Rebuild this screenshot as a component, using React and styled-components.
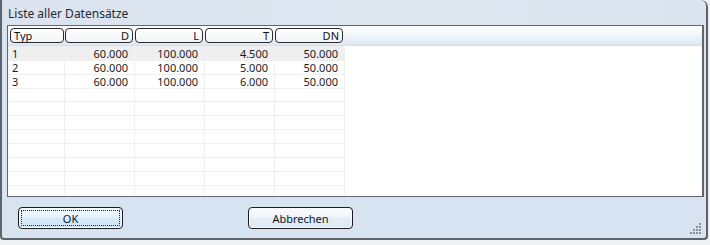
import React from 'react';
import styled, { createGlobalStyle } from 'styled-components';

const Global = createGlobalStyle`
  html, body {
    margin: 0;
    padding: 0;
    background: #eef0f3;
  }
  body {
    font-family: "Noto Sans", "Liberation Sans", sans-serif;
    font-size: 11px;
    color: #1b1b1b;
  }
`

const Window = styled.div`
  position: relative;
  box-sizing: border-box;
  width: 708px;
  height: 240px;
  background: #d7e3f1;
  border-left: 2px solid #5c636c;
  border-right: 2px solid #5c636c;
  border-bottom: 2px solid #5c636c;
  border-top-right-radius: 7px;
  border-bottom-left-radius: 4px;
  border-bottom-right-radius: 4px;
  display: flex;
  flex-direction: column;
`

const TitleBar = styled.div`
  height: 25px;
  padding: 1px 0 0 6px;
  box-sizing: border-box;
  display: flex;
  align-items: center;
  font-size: 12px;
  color: #1e2a36;
  background: linear-gradient(to right, #dae3ee, #dfe7f1 60%, #dae3ee);
  border-top-right-radius: 6px;
`

const List = styled.div`
  box-sizing: border-box;
  margin-left: 5px;
  width: 697px;
  height: 172px;
  background: #fff;
  border: 1px solid #5f6670;
  border-right-width: 2px;
  overflow: hidden;
`

const Header = styled.div`
  display: grid;
  grid-template-columns: 57px 70px 70px 70px 70px 1fr;
  height: 19px;
  align-items: center;
  background: linear-gradient(#ffffff, #f4f8fc 40%, #dde8f5);
  border-bottom: 1px solid #dadfe5;
`

const Pill = styled.div`
  box-sizing: border-box;
  height: 15px;
  margin: 0 ${p => (p.first ? '1px 0 2px' : '2px 0 0')};
  border: 1px solid #2a2a2a;
  border-radius: 4px;
  background: linear-gradient(#ffffff, #f1f4f8);
  padding: 0 3px;
  line-height: 13px;
  text-align: ${p => (p.left ? 'left' : 'right')};
  color: #111;
`

const Row = styled.div`
  display: grid;
  grid-template-columns: 57px 70px 70px 70px 70px;
  height: 14px;
  width: 337px;
  background: ${p => (p.active ? '#efefef' : '#fff')};
`

const Cell = styled.div`
  box-sizing: border-box;
  border-right: 1px solid #f0f0f0;
  border-bottom: 1px solid #f0f0f0;
  padding: ${p => (p.left ? '1px 0 0 4px' : '1px 6px 0 0')};
  text-align: ${p => (p.left ? 'left' : 'right')};
  line-height: 13px;
  white-space: nowrap;
`

const ButtonBar = styled.div`
  display: flex;
  gap: 125px;
  padding: 10px 0 0 16px;
`

const Button = styled.button`
  position: relative;
  box-sizing: border-box;
  width: 105px;
  height: 22px;
  font-family: "Noto Sans", "Liberation Sans", sans-serif;
  font-size: 11px;
  color: #101828;
  border: 1px solid #1c1c1c;
  border-radius: 4px;
  background: ${p => (p.primary
    ? 'linear-gradient(#f2f9fe, #e3f1fb 50%, #d6eaf9 51%, #cfe5f7)'
    : 'linear-gradient(#fafcfe, #eef4fa 50%, #e4edf6 51%, #dde8f3)')};
  box-shadow: inset 0 0 0 1px #f8fbfe;
  padding: 0;
`

const Focus = styled.span`
  position: absolute;
  inset: 2px;
  border: 1px dotted #222;
  border-radius: 1px;
`

const Grip = styled.svg`
  position: absolute;
  right: 3px;
  bottom: 2px;
`

const rows = [
  ['1', '60.000', '100.000', '4.500', '50.000'],
  ['2', '60.000', '100.000', '5.000', '50.000'],
  ['3', '60.000', '100.000', '6.000', '50.000'],
];

const empty = Array.from({ length: 9 }, () => ['', '', '', '', '']);

const App = () => {
  const heads = ['Typ', 'D', 'L', 'T', 'DN'];
  return (
    <>
      <Global />
      <Window>
        <TitleBar>Liste aller Datensätze</TitleBar>
        <List>
          <Header>
            {heads.map((h, i) => (
              <Pill key={h} first={i === 0} left={i === 0}>{h}</Pill>
            ))}
            <div />
          </Header>
          {rows.concat(empty).map((r, i) => (
            <Row key={i} active={i === 0}>
              {r.map((c, j) => (
                <Cell key={j} left={j === 0}>{c}</Cell>
              ))}
            </Row>
          ))}
        </List>
        <ButtonBar>
          <Button primary>
            <Focus />
            OK
          </Button>
          <Button>Abbrechen</Button>
        </ButtonBar>
        <Grip width="14" height="14" viewBox="0 0 14 14">
          {[[10, 1], [7, 4], [10, 4], [4, 7], [7, 7], [10, 7], [1, 10], [4, 10], [7, 10], [10, 10]].map(([x, y], i) => (
            <rect key={i} x={x} y={y} width="2" height="2" fill="#8b9098" />
          ))}
        </Grip>
      </Window>
    </>
  );
};

export default App;
